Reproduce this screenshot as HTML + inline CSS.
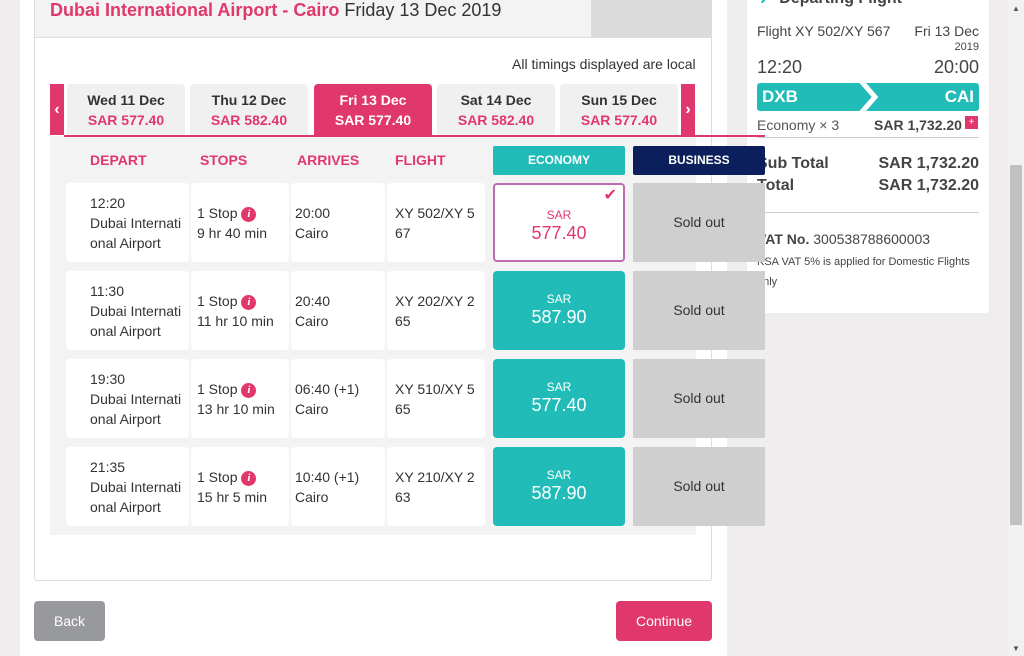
<!DOCTYPE html>
<html><head><meta charset="utf-8"><style>
*{box-sizing:border-box;margin:0;padding:0}
body{width:1024px;height:656px;overflow:hidden;background:#efeded;font-family:"Liberation Sans",sans-serif;position:relative;color:#333}
.a{position:absolute}
.tab{position:absolute;top:84px;width:118px;height:51px;background:#f0f0f0;border-radius:4px 4px 0 0;text-align:center;font-weight:bold;font-size:14px}
.tab .d{margin-top:8px;color:#333}
.tab .p{margin-top:4px;color:#e0386c}
.tab.on{background:#e0386c}
.tab.on .d,.tab.on .p{color:#fff}
.hd{position:absolute;top:152px;font-weight:bold;font-size:14px;color:#e0386c}
.cell{position:absolute;background:#fff;border-radius:4px;height:79px;font-size:14px;line-height:20px;color:#333}
.eco{position:absolute;left:493px;width:132px;height:79px;background:#22bcb8;border-radius:4px;color:#fff;text-align:center}
.eco .s{font-size:12px;margin-top:21px;line-height:14px}
.eco .v{font-size:18px;line-height:22px}
.bus{position:absolute;left:633px;width:132px;height:79px;background:#cfcfcf;color:#333;text-align:center;line-height:79px;font-size:14px}
.i{display:inline-block;width:15px;height:15px;border-radius:50%;background:#e0386c;color:#fff;font-size:11px;font-weight:bold;font-style:italic;text-align:center;line-height:15px;vertical-align:1px;font-family:"Liberation Serif",serif}
</style></head><body>
<div class="a" style="left:20px;top:0;width:707px;height:656px;background:#fff"></div>

<!-- right card -->
<div class="a" style="left:747px;top:0;width:242px;height:313px;background:#fff;border-radius:0 0 3px 3px"></div>
<div class="a" style="left:757px;top:-12px;font-size:16px;font-weight:bold;color:#444"><span style="color:#22bcb8">✈</span> &nbsp;Departing Flight</div>
<div class="a" style="left:757px;top:23px;font-size:14px;color:#444">Flight XY 502/XY 567</div>
<div class="a" style="left:900px;top:23px;width:79px;text-align:right;font-size:14px;color:#444">Fri 13 Dec</div>
<div class="a" style="left:900px;top:41px;width:79px;text-align:right;font-size:11px;color:#444">2019</div>
<div class="a" style="left:757px;top:57px;font-size:18px;color:#444">12:20</div>
<div class="a" style="left:880px;top:57px;width:99px;text-align:right;font-size:18px;color:#444">20:00</div>
<div class="a" style="left:757px;top:83px;width:222px;height:28px;background:#22bcb8;border-radius:3px;overflow:hidden">
<svg class="a" style="left:100px;top:0" width="30" height="28"><polyline points="4,-2 18,14 4,30" fill="none" stroke="#fff" stroke-width="5"/></svg>
<div class="a" style="left:5px;top:4px;color:#fff;font-weight:bold;font-size:17px">DXB</div>
<div class="a" style="right:5px;top:4px;color:#fff;font-weight:bold;font-size:17px">CAI</div></div>
<div class="a" style="left:757px;top:117px;font-size:14px;color:#555">Economy × 3</div>
<div class="a" style="left:874px;top:117px;font-size:14px;font-weight:bold;color:#444">SAR 1,732.20</div>
<div class="a" style="left:965px;top:116px;width:13px;height:13px;background:#e0386c;color:#fff;font-size:10px;text-align:center;line-height:13px">+</div>
<div class="a" style="left:757px;top:137px;width:222px;height:1px;background:#ccc"></div>
<div class="a" style="left:757px;top:155px;font-size:16px;font-weight:bold;color:#444">Sub Total</div>
<div class="a" style="left:979px;top:155px;transform:translateX(-100%);font-size:16px;font-weight:bold;color:#444;white-space:nowrap">SAR 1,732.20</div>
<div class="a" style="left:757px;top:177px;font-size:16px;font-weight:bold;color:#444">Total</div>
<div class="a" style="left:979px;top:177px;transform:translateX(-100%);font-size:16px;font-weight:bold;color:#444;white-space:nowrap">SAR 1,732.20</div>
<div class="a" style="left:757px;top:212px;width:222px;height:1px;background:#ccc"></div>
<div class="a" style="left:757px;top:231px;font-size:14px;color:#444"><b>VAT No.</b> 300538788600003</div>
<div class="a" style="left:757px;top:252px;width:225px;font-size:11px;line-height:20px;color:#444">KSA VAT 5% is applied for Domestic Flights only</div>

<div class="a" style="left:34px;top:-2px;width:678px;height:583px;border:1px solid #ddd;border-radius:3px;background:#fff"></div>
<div class="a" style="left:35px;top:0;width:676px;height:38px;background:#f3f3f3;border-bottom:1px solid #ddd"></div>
<div class="a" style="left:591px;top:0;width:120px;height:38px;background:#dcdbdb"></div>
<div class="a" style="left:50px;top:0;font-size:18px;line-height:20px;color:#333"><b style="color:#e0386c">Dubai International Airport - Cairo</b> Friday 13 Dec 2019</div>
<div class="a" style="left:512px;top:56px;font-size:14px">All timings displayed are local</div>
<div class="a" style="left:50px;top:84px;width:14px;height:51px;background:#e0386c;color:#fff;font-weight:bold;text-align:center;line-height:51px">‹</div>
<div class="a" style="left:681px;top:84px;width:14px;height:51px;background:#e0386c;color:#fff;font-weight:bold;text-align:center;line-height:51px">›</div>
<div class="tab" style="left:67px"><div class="d">Wed 11 Dec</div><div class="p">SAR 577.40</div></div>
<div class="tab" style="left:190px"><div class="d">Thu 12 Dec</div><div class="p">SAR 582.40</div></div>
<div class="tab on" style="left:314px"><div class="d">Fri 13 Dec</div><div class="p">SAR 577.40</div></div>
<div class="tab" style="left:437px"><div class="d">Sat 14 Dec</div><div class="p">SAR 582.40</div></div>
<div class="tab" style="left:560px"><div class="d">Sun 15 Dec</div><div class="p">SAR 577.40</div></div>
<div class="a" style="left:50px;top:136px;width:646px;height:399px;background:#f3f3f3"></div>
<div class="a" style="left:64px;top:135px;width:701px;height:2px;background:#e0386c"></div>
<div class="hd" style="left:90px">DEPART</div>
<div class="hd" style="left:200px">STOPS</div>
<div class="hd" style="left:297px">ARRIVES</div>
<div class="hd" style="left:395px">FLIGHT</div>
<div class="a" style="left:493px;top:146px;width:132px;height:29px;background:#22bcb8;border-radius:2px;color:#fff;font-weight:bold;font-size:12px;text-align:center;line-height:29px">ECONOMY</div>
<div class="a" style="left:633px;top:146px;width:132px;height:29px;background:#0b1f5c;border-radius:2px;color:#fff;font-weight:bold;font-size:12px;text-align:center;line-height:29px">BUSINESS</div>

<div class="cell" style="left:66px;top:183px;width:123px;padding:10px 0 0 24px">12:20<br>Dubai Internati<br>onal Airport</div>
<div class="cell" style="left:191px;top:183px;width:98px;padding:20px 0 0 6px">1 Stop <span class="i">i</span><br>9 hr 40 min</div>
<div class="cell" style="left:291px;top:183px;width:94px;padding:20px 0 0 4px">20:00<br>Cairo</div>
<div class="cell" style="left:387px;top:183px;width:98px;padding:20px 0 0 8px">XY 502/XY 5<br>67</div>
<div class="eco" style="top:183px;background:#fff;border:2px solid #c06ab0;color:#e0386c"><div class="s" style="margin-top:23px">SAR</div><div class="v">577.40</div><div class="a" style="right:6px;top:0;font-size:16px;color:#e0386c">✔</div></div>
<div class="bus" style="top:183px">Sold out</div>

<div class="cell" style="left:66px;top:271px;width:123px;padding:10px 0 0 24px">11:30<br>Dubai Internati<br>onal Airport</div>
<div class="cell" style="left:191px;top:271px;width:98px;padding:20px 0 0 6px">1 Stop <span class="i">i</span><br>11 hr 10 min</div>
<div class="cell" style="left:291px;top:271px;width:94px;padding:20px 0 0 4px">20:40<br>Cairo</div>
<div class="cell" style="left:387px;top:271px;width:98px;padding:20px 0 0 8px">XY 202/XY 2<br>65</div>
<div class="eco" style="top:271px"><div class="s">SAR</div><div class="v">587.90</div></div>
<div class="bus" style="top:271px">Sold out</div>

<div class="cell" style="left:66px;top:359px;width:123px;padding:10px 0 0 24px">19:30<br>Dubai Internati<br>onal Airport</div>
<div class="cell" style="left:191px;top:359px;width:98px;padding:20px 0 0 6px">1 Stop <span class="i">i</span><br>13 hr 10 min</div>
<div class="cell" style="left:291px;top:359px;width:94px;padding:20px 0 0 4px">06:40 (+1)<br>Cairo</div>
<div class="cell" style="left:387px;top:359px;width:98px;padding:20px 0 0 8px">XY 510/XY 5<br>65</div>
<div class="eco" style="top:359px"><div class="s">SAR</div><div class="v">577.40</div></div>
<div class="bus" style="top:359px">Sold out</div>

<div class="cell" style="left:66px;top:447px;width:123px;padding:10px 0 0 24px">21:35<br>Dubai Internati<br>onal Airport</div>
<div class="cell" style="left:191px;top:447px;width:98px;padding:20px 0 0 6px">1 Stop <span class="i">i</span><br>15 hr 5 min</div>
<div class="cell" style="left:291px;top:447px;width:94px;padding:20px 0 0 4px">10:40 (+1)<br>Cairo</div>
<div class="cell" style="left:387px;top:447px;width:98px;padding:20px 0 0 8px">XY 210/XY 2<br>63</div>
<div class="eco" style="top:447px"><div class="s">SAR</div><div class="v">587.90</div></div>
<div class="bus" style="top:447px">Sold out</div>

<div class="a" style="left:34px;top:601px;width:71px;height:40px;background:#98999d;border-radius:4px;color:#fff;font-size:14px;text-align:center;line-height:40px">Back</div>
<div class="a" style="left:616px;top:601px;width:96px;height:40px;background:#e0386c;border-radius:4px;color:#fff;font-size:14px;text-align:center;line-height:40px">Continue</div>

<div class="a" style="left:1008px;top:0;width:16px;height:656px;background:#f1f1f1"></div>
<div class="a" style="left:1010px;top:165px;width:12px;height:360px;background:#c1c1c1"></div>
<div class="a" style="left:1012px;top:4px;font-size:8px;color:#555">▲</div>
<div class="a" style="left:1012px;top:644px;font-size:8px;color:#555">▼</div>
</body></html>
